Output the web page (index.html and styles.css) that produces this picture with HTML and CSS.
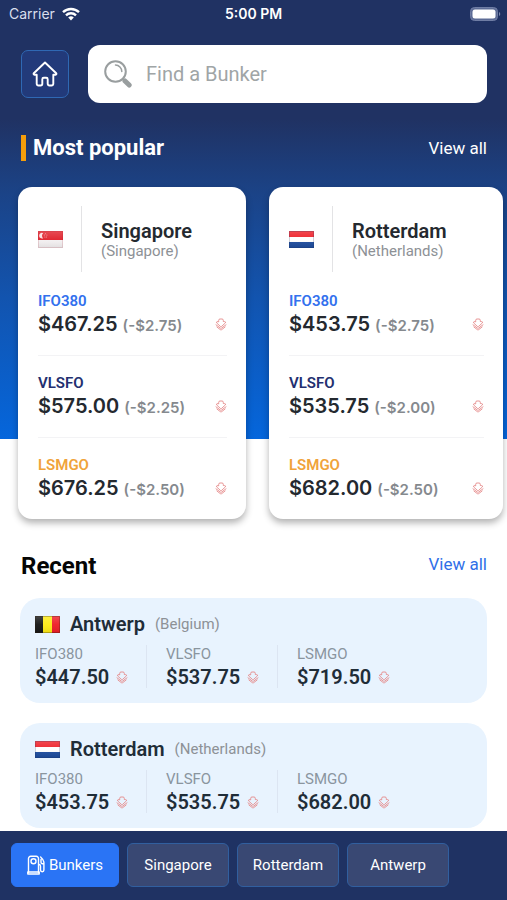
FILE: index.html
```html
<!DOCTYPE html>
<html lang="en">
<head>
<meta charset="utf-8">
<meta name="viewport" content="width=device-width, initial-scale=1">
<title>Bunker prices</title>
<link rel="stylesheet" href="styles.css">
</head>
<body>
<svg class="defs" aria-hidden="true">
  <defs>
    <linearGradient id="gloss" x1="0" y1="0" x2="0" y2="1">
      <stop offset="0" stop-color="#fff" stop-opacity=".2"/>
      <stop offset=".5" stop-color="#fff" stop-opacity=".05"/>
      <stop offset="1" stop-color="#000" stop-opacity=".08"/>
    </linearGradient>
  </defs>
  <symbol id="down" viewBox="0 0 12 13">
    <path d="M3.700 3.500V2.300Q3.700 1 5 1h2q1.300 0 1.300 1.300v1.200h1.200q1.600.2.800 1.500L6.600 8.400q-.6.5-1.200 0L1.700 5q-.8-1.300.8-1.500z M1 6.800l4.400 3.300q.6.4 1.200 0L11 6.800 M1.900 9l3.500 2.700q.6.400 1.200 0L10.100 9" fill="none" stroke="currentColor" stroke-width=".9" stroke-linejoin="round" stroke-linecap="round"/>
  </symbol>
  <symbol id="flag-sg" viewBox="0 0 25 17">
    <path fill="#f4f1f2" d="M0 0h25v17H0z"/><path fill="#e0202a" d="M0 0h25v9H0z"/>
    <path d="M5.200 2.200a2.800 2.800 0 1 0 0 5 3.200 3.200 0 0 1 0-5z" fill="#fff" fill-opacity=".85"/>
    <g fill="#fff" fill-opacity=".6"><circle cx="7.500" cy="2.700" r=".5"/><circle cx="6.300" cy="4" r=".5"/><circle cx="8.900" cy="4" r=".5"/><circle cx="6.900" cy="6" r=".5"/><circle cx="8.400" cy="6" r=".5"/></g>
    <path fill="url(#gloss)" d="M0 0h25v17H0z"/><path d="M.5.5h24v16H.5z" fill="none" stroke="#a02030" stroke-opacity=".16"/>
  </symbol>
  <symbol id="flag-nl" viewBox="0 0 25 17">
    <path fill="#fff" d="M0 0h25v17H0z"/><path fill="#ee1c25" d="M0 0h25v6H0z"/><path fill="#1d4c9e" d="M0 11h25v6H0z"/>
    <path fill="url(#gloss)" d="M0 0h25v17H0z"/><path d="M.5.5h24v16H.5z" fill="none" stroke="#203060" stroke-opacity=".22"/>
  </symbol>
  <symbol id="flag-be" viewBox="0 0 25 17">
    <path fill="#141414" d="M0 0h8v17H0z"/><path fill="#fdea14" d="M8 0h9v17H8z"/><path fill="#ee1c25" d="M17 0h8v17h-8z"/>
    <path fill="url(#gloss)" d="M0 0h25v17H0z"/><path d="M.5.5h24v16H.5z" fill="none" stroke="#302010" stroke-opacity=".3"/>
  </symbol>
</svg>

<main>
  <section class="hero">
    <div class="status">
      <span class="carrier">Carrier
        <svg width="18" height="14" viewBox="0 0 18 14" aria-hidden="true"><g fill="none" stroke="#fff" stroke-width="2.400"><path d="M1 5.200a11.500 11.500 0 0 1 16 0"/><path d="M4 8.300a7.200 7.200 0 0 1 10 0"/></g><path d="M9 13.400 6.200 10.500a4 4 0 0 1 5.600 0z" fill="#fff"/></svg>
      </span>
      <span class="time">5:00 PM</span>
      <svg class="battery" width="31" height="14" viewBox="0 0 31 14" aria-hidden="true"><rect x=".5" y=".5" width="27" height="13" rx="4" fill="#5d6c96" stroke="#6f7da4"/><rect x="2.500" y="2.500" width="23" height="9" rx="2.500" fill="#fff"/><path d="M29 5a2.200 2.200 0 0 1 0 4z" fill="#7b88ac"/></svg>
    </div>

    <div class="tools">
      <button class="home" type="button" aria-label="Home">
        <svg width="26" height="26" viewBox="0 0 26 26" aria-hidden="true"><path d="M13 1.500 1.800 12.200a.9.900 0 0 0 .6 1.500H4.700v9.100a1.700 1.700 0 0 0 1.700 1.700h2.200a1.700 1.700 0 0 0 1.700-1.700v-4.500a1.500 1.500 0 0 1 1.500-1.500h2.400a1.500 1.500 0 0 1 1.500 1.500v4.500a1.700 1.700 0 0 0 1.700 1.700h2.200a1.700 1.700 0 0 0 1.700-1.700v-9.100h2.300a.9.900 0 0 0 .6-1.500z" fill="none" stroke="#fff" stroke-width="1.900" stroke-linejoin="round"/></svg>
      </button>
      <label class="search">
        <svg width="28" height="28" viewBox="0 0 28 28" aria-hidden="true"><g fill="none" stroke="#999e9f"><circle cx="11.500" cy="11.500" r="10.300" stroke-width="2"/><path d="M11.500 5a6.600 6.600 0 0 1 6.300 6.500" stroke-width="1.500" stroke-linecap="round"/><path d="m18.500 18.800 2 2" stroke-width="2"/><path d="m21 21 4.200 4" stroke-width="5" stroke-linecap="round"/></g></svg>
        <input type="text" placeholder="Find a Bunker" aria-label="Find a Bunker">
      </label>
    </div>

    <div class="section-head">
      <h2 class="marked">Most popular</h2>
      <a href="#popular">View all</a>
    </div>

    <div class="popular" id="popular">
      <article class="card">
        <header><svg class="flag" aria-hidden="true"><use href="#flag-sg"/></svg><div class="place"><h3>Singapore</h3><p>(Singapore)</p></div></header>
        <div class="quote"><span class="fuel ifo">IFO380</span><div class="line"><strong>$467.25</strong><span class="delta">(-$2.75)</span><svg class="down" aria-hidden="true"><use href="#down"/></svg></div></div>
        <div class="quote"><span class="fuel vls">VLSFO</span><div class="line"><strong>$575.00</strong><span class="delta">(-$2.25)</span><svg class="down" aria-hidden="true"><use href="#down"/></svg></div></div>
        <div class="quote"><span class="fuel lsm">LSMGO</span><div class="line"><strong>$676.25</strong><span class="delta">(-$2.50)</span><svg class="down" aria-hidden="true"><use href="#down"/></svg></div></div>
      </article>
      <article class="card">
        <header><svg class="flag" aria-hidden="true"><use href="#flag-nl"/></svg><div class="place"><h3>Rotterdam</h3><p>(Netherlands)</p></div></header>
        <div class="quote"><span class="fuel ifo">IFO380</span><div class="line"><strong>$453.75</strong><span class="delta">(-$2.75)</span><svg class="down" aria-hidden="true"><use href="#down"/></svg></div></div>
        <div class="quote"><span class="fuel vls">VLSFO</span><div class="line"><strong>$535.75</strong><span class="delta">(-$2.00)</span><svg class="down" aria-hidden="true"><use href="#down"/></svg></div></div>
        <div class="quote"><span class="fuel lsm">LSMGO</span><div class="line"><strong>$682.00</strong><span class="delta">(-$2.50)</span><svg class="down" aria-hidden="true"><use href="#down"/></svg></div></div>
      </article>
    </div>
  </section>

  <section class="recent" id="recent">
    <div class="section-head">
      <h2>Recent</h2>
      <a href="#recent">View all</a>
    </div>
    <article class="port">
      <header><svg class="flag" aria-hidden="true"><use href="#flag-be"/></svg><h3>Antwerp</h3><p>(Belgium)</p></header>
      <div class="prices">
        <div><span>IFO380</span><strong>$447.50 <svg class="down" aria-hidden="true"><use href="#down"/></svg></strong></div>
        <div><span>VLSFO</span><strong>$537.75 <svg class="down" aria-hidden="true"><use href="#down"/></svg></strong></div>
        <div><span>LSMGO</span><strong>$719.50 <svg class="down" aria-hidden="true"><use href="#down"/></svg></strong></div>
      </div>
    </article>
    <article class="port">
      <header><svg class="flag" aria-hidden="true"><use href="#flag-nl"/></svg><h3>Rotterdam</h3><p>(Netherlands)</p></header>
      <div class="prices">
        <div><span>IFO380</span><strong>$453.75 <svg class="down" aria-hidden="true"><use href="#down"/></svg></strong></div>
        <div><span>VLSFO</span><strong>$535.75 <svg class="down" aria-hidden="true"><use href="#down"/></svg></strong></div>
        <div><span>LSMGO</span><strong>$682.00 <svg class="down" aria-hidden="true"><use href="#down"/></svg></strong></div>
      </div>
    </article>
  </section>
</main>

<nav class="tabs">
  <button class="active" type="button"><svg width="18" height="20" viewBox="0 0 18 20" aria-hidden="true"><g fill="none" stroke="#fff" stroke-width="1.400" stroke-linejoin="round" stroke-linecap="round"><path d="M1.500 17.500V3.500a2.200 2.200 0 0 1 2.200-2.200h5.600a2.200 2.200 0 0 1 2.200 2.200v14"/><rect x=".8" y="17" width="11.400" height="2"/><circle cx="6.500" cy="6.200" r="2.500"/><path d="M11.800 9.500q1.700 0 1.700 1.700v3.900a1.700 1.700 0 0 0 3.400 0V7.200Q16.500 4.500 13.600 2M14 4.500v2.800a1.500 1.500 0 0 0 1.500 1.500h1.300"/></g></svg>Bunkers</button>
  <button type="button">Singapore</button>
  <button type="button">Rotterdam</button>
  <button type="button">Antwerp</button>
</nav>
</body>
</html>
```
FILE: styles.css
```css
* { box-sizing: border-box; }

body {
  margin: 0;
  min-height: 100vh;
  display: flex;
  flex-direction: column;
  background: #fff;
  color: #24292f;
  font-family: Roboto, "Liberation Sans", sans-serif;
}

h2, h3, p { margin: 0; }
a { text-decoration: none; }
button, input { font: inherit; }
main { flex: 1; }

.defs {
  position: absolute;
  width: 0;
  height: 0;
}

.flag {
  flex: none;
  width: 25px;
  height: 17px;
}

.down {
  flex: none;
  width: 12px;
  height: 13px;
  color: #e58a8a;
}

.hero {
  display: flex;
  flex-direction: column;
  background: linear-gradient(#203263 0%, #203263 27%, #1b4387 44%, #1254af 68%, #0566dc 100%);
}

.status {
  display: grid;
  grid-template-columns: 1fr auto 1fr;
  align-items: center;
  height: 27px;
  padding: 0 6px 0 9px;
  color: #fff;
  font-family: Inter, sans-serif;
  font-size: 14px;
}

.carrier {
  display: flex;
  align-items: center;
  gap: 7px;
  color: #d9dfed;
}

.time {
  padding-right: 3px;
  font-size: 14px;
  font-weight: 600;
}

.battery { justify-self: end; }

.tools {
  display: flex;
  align-items: center;
  gap: 19px;
  padding: 18px 20px 0 21px;
}

.home {
  display: grid;
  place-items: center;
  flex: none;
  width: 48px;
  height: 48px;
  padding: 0;
  border: 1px solid #2f68b4;
  border-radius: 7px;
  background: #223a7a;
}

.search {
  flex: 1;
  display: flex;
  align-items: center;
  gap: 14px;
  height: 58px;
  padding: 0 16px;
  border-radius: 12px;
  background: #fff;
}

.search input {
  flex: 1;
  min-width: 0;
  padding: 0;
  border: 0;
  outline: 0;
  background: none;
  color: #24292f;
  font-size: 20px;
}

.search input::placeholder {
  color: #a0a5a6;
  opacity: 1;
}

.section-head {
  display: flex;
  align-items: flex-start;
  justify-content: space-between;
  padding: 0 20px 0 21px;
}

.hero .section-head {
  align-items: center;
  padding-top: 32px;
  color: #fff;
}

.section-head h2 {
  color: #050505;
  font-size: 24px;
  line-height: 28px;
  font-weight: 700;
}

.section-head .marked {
  padding-left: 7px;
  border-left: 5px solid #f59e0b;
  color: #fff;
  font-size: 22px;
  line-height: 26px;
}

.section-head a {
  color: #2f6fe8;
  font-size: 17px;
  line-height: 24px;
}

.hero .section-head a { color: #fff; }

.popular {
  display: grid;
  grid-template-columns: 38fr 39fr;
  gap: 23px;
  margin: 26px 0 -80px;
  padding: 0 4px 0 18px;
}

.card {
  padding: 19px 19px 0 20px;
  border-radius: 14px;
  background: #fff;
  box-shadow: 0 4px 7px rgba(0, 0, 0, .3);
}

.card header {
  display: flex;
  align-items: center;
  gap: 18px;
  margin-bottom: 2px;
}

.place {
  display: flex;
  flex-direction: column;
  justify-content: center;
  height: 66px;
  padding: 2px 0 0 19px;
  border-left: 1px solid #e3e3e5;
}

h3 {
  font-size: 20px;
  line-height: 22px;
  font-weight: 600;
}

header p {
  color: #8d9196;
  font-size: 15px;
  line-height: 18px;
}

.quote {
  display: flex;
  flex-direction: column;
  padding: 18px 0 17px;
  border-bottom: 1px solid #f3f3f5;
}

.quote:last-child { border-bottom: 0; }

.fuel {
  font-size: 15px;
  line-height: 18px;
  font-weight: 600;
}

.ifo { color: #3371ee; }
.vls { color: #232f70; }
.lsm { color: #f0a33a; }

.line {
  display: flex;
  align-items: center;
  gap: 5px;
  height: 28px;
  font-family: Inter, sans-serif;
}

.line strong {
  font-size: 20px;
  font-weight: 600;
}

.delta {
  margin-right: auto;
  color: #85898e;
  font-size: 15px;
  line-height: 18px;
  padding-top: 3px;
  font-weight: 600;
}

.recent {
  display: flex;
  flex-direction: column;
  gap: 20px;
  padding: 113px 0 3px;
}

.recent .section-head { margin-bottom: -2px; }

.port {
  margin: 0 20px;
  padding: 15px;
  border-radius: 20px;
  background: #e8f3fe;
}

.port header {
  display: flex;
  align-items: center;
  gap: 10px;
  margin-bottom: 10px;
}

.port h3, .port strong { color: #1f2d38; }

.prices {
  display: grid;
  grid-template-columns: repeat(3, minmax(0, 131px));
}

.prices div {
  display: flex;
  flex-direction: column;
  height: 43px;
}

.prices div + div {
  margin-left: -20px;
  padding-left: 19px;
  border-left: 1px solid #dce5f2;
}

.prices span {
  color: #8a959e;
  font-size: 15px;
  line-height: 18px;
}

.prices strong {
  display: flex;
  align-items: center;
  gap: 7px;
  font-size: 20px;
  line-height: 28px;
  font-weight: 600;
}

.tabs {
  position: sticky;
  bottom: 0;
  display: flex;
  gap: 8px;
  padding: 12px 11px 13px;
  background: #1f3263;
}

.tabs button {
  display: flex;
  align-items: center;
  justify-content: center;
  gap: 4px;
  flex: 0 1 102px;
  height: 44px;
  padding: 0;
  border: 1px solid #315f9f;
  border-radius: 6px;
  background: #394873;
  color: #fff;
  font-size: 15px;
}

.tabs .active {
  flex-basis: 108px;
  border-color: #2a74f5;
  background: #2a74f5;
}
```
